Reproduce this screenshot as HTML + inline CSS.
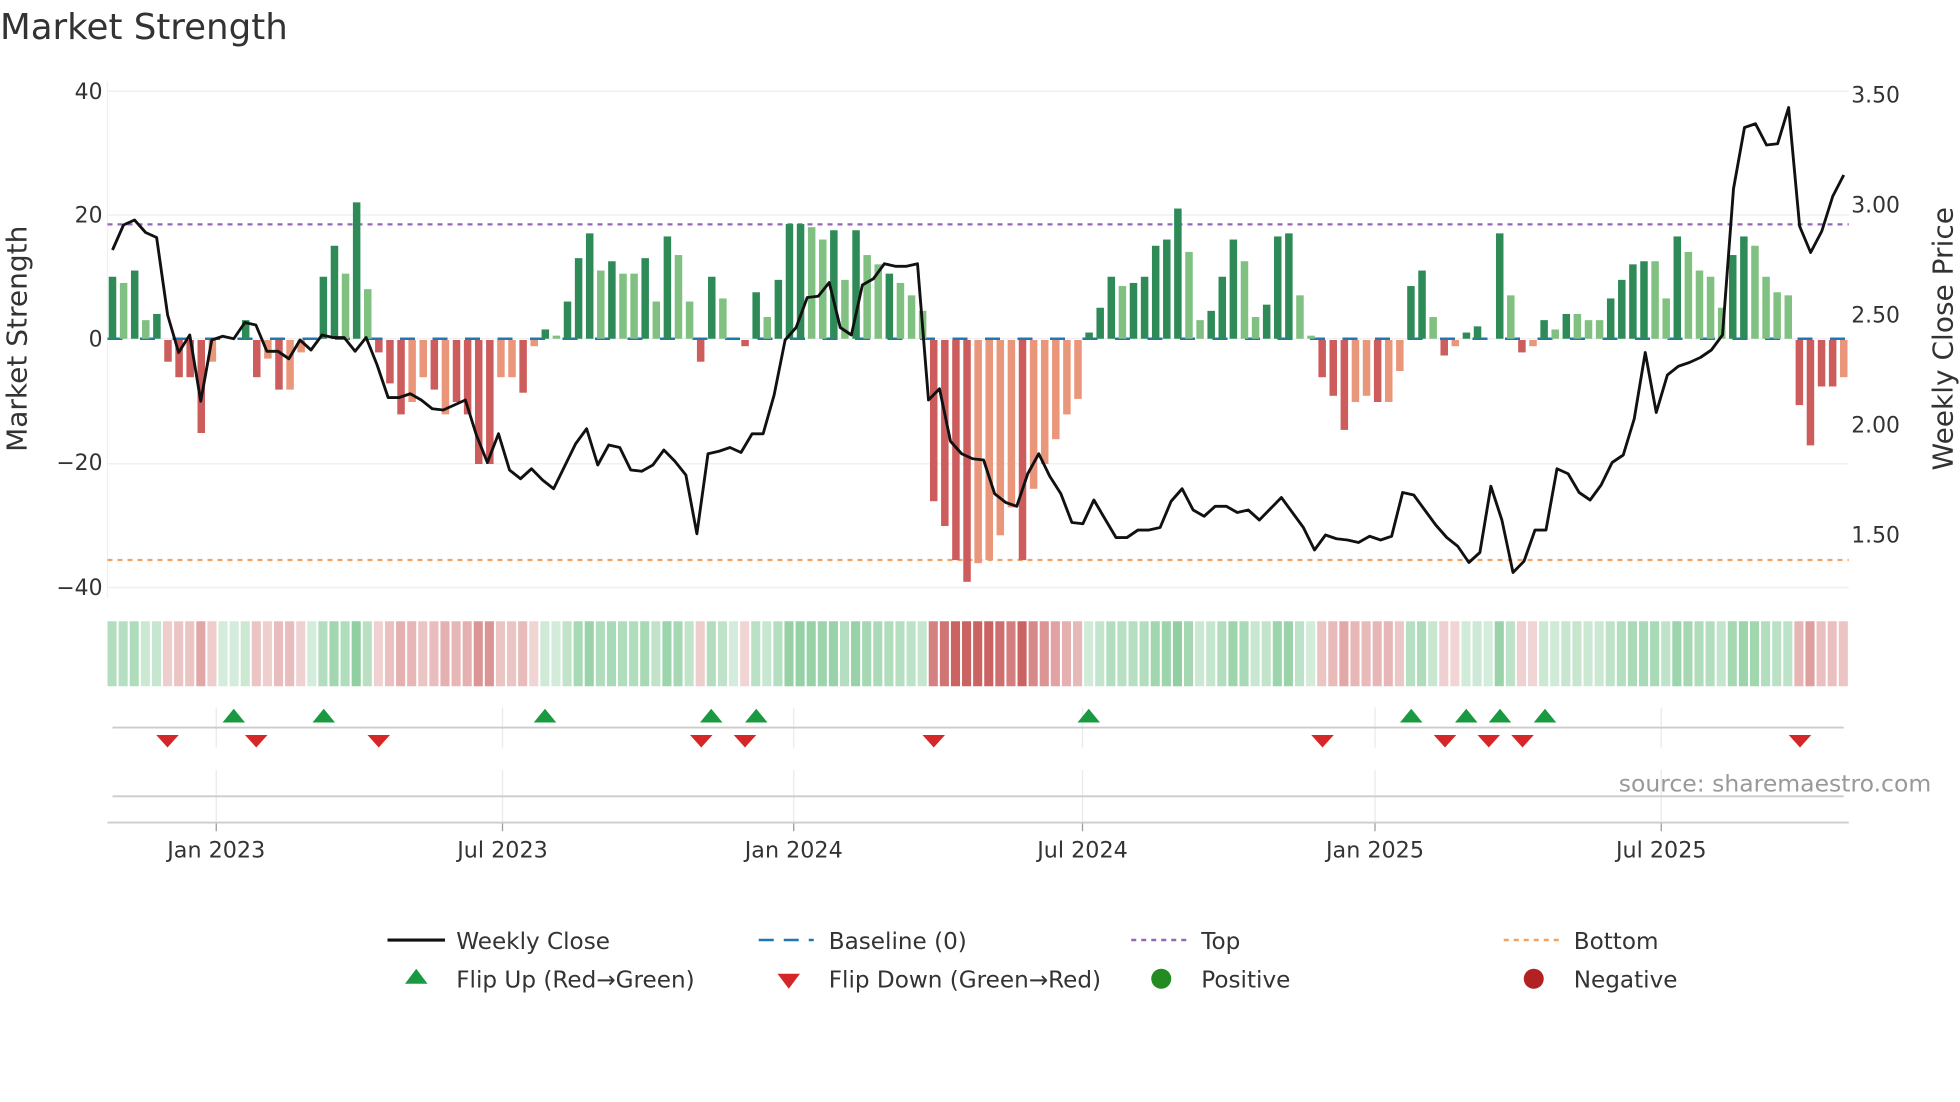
<!DOCTYPE html>
<html><head><meta charset="utf-8"><style>
html,body{margin:0;padding:0;background:#fff;width:1960px;height:1102px;overflow:hidden}
svg text{font-family:"DejaVu Sans","Liberation Sans",sans-serif;fill:#333}
</style></head><body>
<svg id="s" width="1960" height="1102" viewBox="0 0 1568 881.6" xmlns="http://www.w3.org/2000/svg">
<text x="0" y="31" font-size="28.5">Market Strength</text>
<g id="grid"></g>
<g id="bars"></g>
<g id="line"></g>
<g id="strip"></g>
<g id="marks"></g>
<g font-size="17.5">
<text x="82" y="79" text-anchor="end">40</text>
<text x="82" y="178" text-anchor="end">20</text>
<text x="82" y="277" text-anchor="end">0</text>
<text x="82" y="376" text-anchor="end">−20</text>
<text x="82" y="476" text-anchor="end">−40</text>
<text x="1481" y="82">3.50</text>
<text x="1481" y="170">3.00</text>
<text x="1481" y="258">2.50</text>
<text x="1481" y="346">2.00</text>
<text x="1481" y="434">1.50</text>
</g>
<text transform="translate(21,271) rotate(-90)" font-size="22.4" text-anchor="middle">Market Strength</text>
<text transform="translate(1562,271) rotate(-90)" font-size="22.4" text-anchor="middle">Weekly Close Price</text>
<text x="1545" y="633" font-size="18.8" text-anchor="end" style="fill:#999">source: sharemaestro.com</text>
<g font-size="17.8" text-anchor="middle">
<text x="173" y="686">Jan 2023</text><text x="402" y="686">Jul 2023</text><text x="635" y="686">Jan 2024</text>
<text x="866" y="686">Jul 2024</text><text x="1100" y="686">Jan 2025</text><text x="1329" y="686">Jul 2025</text>
</g>
<g font-size="18.5">
<line x1="310" y1="752" x2="356" y2="752" stroke="#111" stroke-width="2.5"/><text x="365" y="759">Weekly Close</text>
<line x1="607" y1="752" x2="651" y2="752" stroke="#1f77b4" stroke-width="2" stroke-dasharray="12,8"/><text x="663" y="759">Baseline (0)</text>
<line x1="905" y1="752" x2="949" y2="752" stroke="#9467bd" stroke-width="2" stroke-dasharray="4,4"/><text x="961" y="759">Top</text>
<line x1="1203" y1="752" x2="1247" y2="752" stroke="#f4a261" stroke-width="2" stroke-dasharray="4,4"/><text x="1259" y="759">Bottom</text>
<polygon points="333,775 324,787 342,787" fill="#1a9a40"/><text x="365" y="790">Flip Up (Red→Green)</text>
<polygon points="631,791 622,779 640,779" fill="#d62728"/><text x="663" y="790">Flip Down (Green→Red)</text>
<circle cx="929" cy="783" r="8" fill="#228b22"/><text x="961" y="790">Positive</text>
<circle cx="1227" cy="783" r="8" fill="#b22222"/><text x="1259" y="790">Negative</text>
</g>
</svg>
<script>
var NS="http://www.w3.org/2000/svg";
function el(p,t,a){var e=document.createElementNS(NS,t);for(var k in a)e.setAttribute(k,a[k]);document.getElementById(p).appendChild(e);return e;}
var S="10d 9l 11d 3l 4d -3.5d -6d -6d -15d -3.5l 0l 0l 3d -6d -3l -8d -8l -2l 0l 10d 15d 10.5l 22d 8l -2d -7d -12d -10l -6l -8d -12l -10d -12d -20d -20d -6l -6l -8.5d -1l 1.5d 0.5l 6d 13d 17d 11l 12.5d 10.5l 10.5l 13d 6l 16.5d 13.5l 6l -3.5d 10d 6.5l 0l -1d 7.5d 3.5l 9.5d 18.5d 18.5d 18l 16l 17.5d 9.5l 17.5d 13.5l 12l 10.5d 9l 7l 4.5l -26d -30d -35.5d -39d -36l -35.5l -31.5l -27l -35.5d -24l -20l -16l -12l -9.5l 1d 5d 10d 8.5l 9d 10d 15d 16d 21d 14l 3l 4.5d 10d 16d 12.5l 3.5l 5.5d 16.5d 17d 7l 0.5l -6d -9d -14.5d -10l -9l -10d -10l -5l 8.5d 11d 3.5l -2.5d -1l 1d 2d 0l 17d 7l -2d -1l 3d 1.5l 4d 4l 3l 3l 6.5d 9.5d 12d 12.5d 12.5l 6.5l 16.5d 14l 11l 10l 5l 13.5d 16.5d 15l 10l 7.5l 7l -10.5d -17d -7.5d -7.5d -6l".split(" ");
var P=[200,180,176,186,190,252,282,268,321,272,269,271,258,260,281,281,287,272,280,268,270,270,281,270,292,318,318,315,320,327,328,324,320,348,370,347,376,383,375,384,391,373,355,343,372,356,358,376,377,372,360,369,380,427,363,361,358,362,347,347,316,272,262,238,237,226,262,268,228,223,211,213,213,211,320,311,353,363,367,368,395,402,405,379,363,381,395,418,419,400,415,430,430,424,424,422,401,391,408,413,405,405,410,408,416,407,398,410,422,440,428,431,432,434,429,432,429,394,396,408,420,430,437,450,442,389,416,458,449,424,424,375,379,394,400,388,370,364,335,282,330,300,293,290,286,280,268,151,102,99,116,115,86,181,202,185,157,140];
var Z=271,U=4.96,X0=90,L=86,R=1479;
var W=(1475-X0)/(S.length-1);
[73,172,271,371,470].forEach(function(y){el("grid","line",{x1:L,y1:y,x2:R,y2:y,stroke:"#eef0f3","stroke-width":1.2});});
el("grid","line",{x1:L,y1:65,x2:L,y2:478,stroke:"#eef0f3","stroke-width":1});
[173,402,635,866,1100,1329].forEach(function(x){el("grid","line",{x1:x,y1:566,x2:x,y2:598,stroke:"#e8eaee","stroke-width":1});el("grid","line",{x1:x,y1:616,x2:x,y2:658,stroke:"#e8eaee","stroke-width":1});el("grid","line",{x1:x,y1:658,x2:x,y2:665,stroke:"#999","stroke-width":1});});
el("grid","line",{x1:90,y1:582,x2:1475,y2:582,stroke:"#ccc","stroke-width":1.5});
el("grid","line",{x1:90,y1:637,x2:1475,y2:637,stroke:"#ccc","stroke-width":1.5});
el("grid","line",{x1:86,y1:658,x2:1479,y2:658,stroke:"#ccc","stroke-width":1.5});
el("grid","line",{x1:L,y1:271,x2:R,y2:271,stroke:"#1f77b4","stroke-width":2,"stroke-dasharray":"12,14"});
el("grid","line",{x1:L,y1:179.5,x2:R,y2:179.5,stroke:"#9467bd","stroke-width":1.8,"stroke-dasharray":"4,4"});
el("grid","line",{x1:L,y1:448,x2:R,y2:448,stroke:"#f4a261","stroke-width":1.8,"stroke-dasharray":"4,4"});
S.forEach(function(s,i){var v=parseFloat(s),d=s.slice(-1)=="d",x=X0+i*W-3,c;
 if(v>=0)c=d?"#2e8b57":"#80c080";else c=d?"#cd5c5c":"#e9967a";
 if(v!=0){var h=Math.abs(v)*U;el("bars","rect",{x:x,y:v>0?Z-h:Z+1,width:6,height:h,fill:c});}
 var sc;
 if(v>=0){sc="rgba(60,170,90,"+(0.22+0.35*Math.min(1,v/20))+")";}else{sc="rgba(190,60,60,"+(0.2+0.6*Math.min(1,-v/35))+")";}
 el("strip","rect",{x:X0+i*W-4,y:497,width:W-1.6,height:52,fill:sc});
});
var WP=(1475-X0)/(P.length-1);
var pts=P.map(function(y,i){return (X0+i*WP).toFixed(1)+","+y;}).join(" ");
el("line","polyline",{points:pts,fill:"none",stroke:"#111","stroke-width":2.3,"stroke-linejoin":"round"});
[187,259,436,569,605,871,1129,1173,1200,1236].forEach(function(x){el("marks","polygon",{points:x+",567 "+(x-9)+",578 "+(x+9)+",578",fill:"#1a9a40"});});
[134,205,303,561,596,747,1058,1156,1191,1218,1440].forEach(function(x){el("marks","polygon",{points:x+",598 "+(x-9)+",588 "+(x+9)+",588",fill:"#d62728"});});
</script>
</body></html>
